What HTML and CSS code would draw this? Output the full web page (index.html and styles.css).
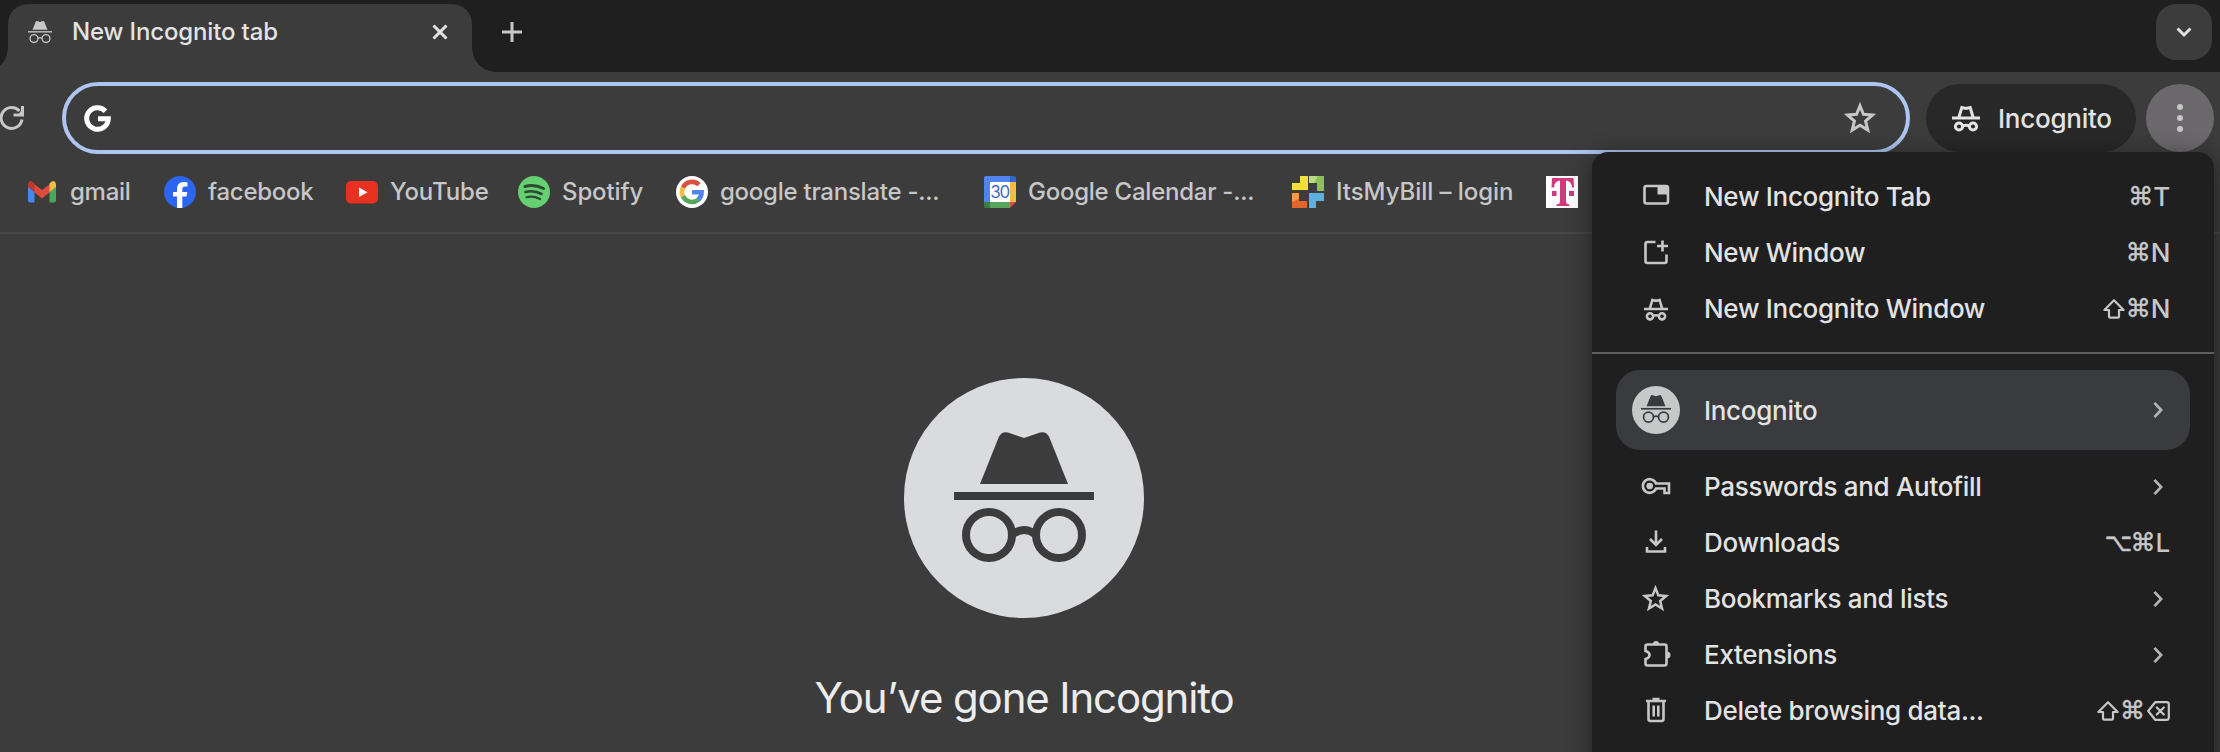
FILE: index.html
```html
<!DOCTYPE html>
<html lang="en">
<head>
<meta charset="utf-8">
<title>New Incognito tab</title>
<link rel="stylesheet" href="styles.css">
</head>
<body>
<svg class="defs" aria-hidden="true">
  <defs>
    <symbol id="spy" viewBox="0 0 140 130">
      <path d="M26 52 45 4.500Q48 -1 54 .5L70 6 86 .5Q92 -1 95 4.500L114 52Z"/>
      <path d="M0 60h140v8H0z"/>
      <g fill="none" stroke="currentColor" stroke-width="8"><circle cx="35" cy="103" r="23"/><circle cx="105" cy="103" r="23"/><path d="M59 102q11-8 22 0"/></g>
    </symbol>
    <symbol id="spy-line" viewBox="0 0 28 28">
      <g fill="none" stroke="currentColor" stroke-width="3"><path d="M7 13 9.800 3.500l4.200 1 4.200-1L21 13M0 14h28"/><circle cx="7" cy="22.500" r="3.600"/><circle cx="21" cy="22.500" r="3.600"/><path d="M10.500 22q3.500-1.500 7 0"/></g>
    </symbol>
    <symbol id="star" viewBox="0 0 30 30"><path fill="none" stroke="currentColor" stroke-width="2.800" d="m15 3.500 3.200 8 8.600.7-6.600 5.600 2.100 8.400L15 21.700l-7.300 4.500 2.100-8.400-6.600-5.600 8.600-.7z"/></symbol>
    <symbol id="chev" viewBox="0 0 12 20"><path fill="none" stroke="currentColor" stroke-width="3" d="m2 2 7.500 8L2 18"/></symbol>
    <symbol id="shift" viewBox="0 0 22 20"><path fill="none" stroke="currentColor" stroke-width="2.200" stroke-linejoin="round" d="M11 1.200 20.600 11H16v6.500q0 1.200-1.200 1.200H7.200Q6 18.700 6 17.500V11H1.400z"/></symbol>
    <symbol id="erase" viewBox="0 0 23 20"><path fill="none" stroke="currentColor" stroke-width="2.200" stroke-linejoin="round" stroke-linecap="round" d="M8.200 1.200h11.600q2 0 2 2v13.600q0 2-2 2H8.200L1.200 10zM9.800 6.500l7 7m0-7-7 7"/></symbol>
  </defs>
</svg>

<header class="tabstrip">
  <div class="tab">
    <svg class="tab-icon"><use href="#spy"/></svg>
    <span class="tab-title">New Incognito tab</span>
    <svg class="tab-close" viewBox="0 0 16 16"><path d="m1.500 1.500 13 13m0-13-13 13"/></svg>
  </div>
  <svg class="tab-add" viewBox="0 0 20 20"><path d="M10 0v20M0 10h20"/></svg>
  <div class="tab-search"><svg viewBox="0 0 16 10"><path d="m1.500 1.500 6.500 6.500 6.500-6.500"/></svg></div>
</header>

<div class="toolbar">
  <svg class="reload" viewBox="0 0 24 24"><path d="M22 13.500A10.500 10.500 0 1 1 19.500 5"/><path class="solid" d="M24 0v10.500H13.500V7.500h5.500L21 5V0z"/></svg>
  <div class="omnibox">
    <svg class="g-white" viewBox="0 0 27 27"><path d="M21.500 6.200A10.800 10.800 0 1 0 24.300 13.700H14"/></svg>
    <svg class="omni-star"><use href="#star"/></svg>
  </div>
  <div class="pill"><svg><use href="#spy-line"/></svg><span>Incognito</span></div>
  <div class="more"><i></i><i></i><i></i></div>
</div>

<nav class="bookmarks">
  <a class="bm bm-gmail"><svg viewBox="0 0 32 32"><path fill="#4a86ee" d="M2 10l6.500 5v11.500H4q-2 0-2-2z"/><path fill="#4aa557" d="M30 10l-6.500 5v11.500H28q2 0 2-2z"/><path fill="#dd4b3e" d="M8 8l8 6 8-6v8l-8 6.500L8 16z"/><path fill="#b93a31" d="M2 9q0-4 3.500-4L8.500 7.500V16L2 11z"/><path fill="#f2be42" d="M30 9q0-4-3.500-4l-3 2.500V16l6.500-5z"/></svg><span>gmail</span></a>
  <a class="bm bm-fb"><svg viewBox="0 0 32 32"><circle cx="16" cy="16" r="16" fill="#2b65f0"/><path fill="#fff" d="M13 32V20.500H9V16h4v-3q0-7 7-7 2 0 3.500.4v4.200h-2.500q-2.700 0-2.700 2.700V16h5l-.8 4.500h-4.200V32z"/></svg><span>facebook</span></a>
  <a class="bm bm-yt"><svg viewBox="0 0 32 32"><rect y="5" width="32" height="22.500" rx="5" fill="#e8311f"/><path fill="#fff" d="m13 11.500 8.500 4.700L13 21z"/></svg><span>YouTube</span></a>
  <a class="bm bm-sp"><svg viewBox="0 0 32 32"><circle cx="16" cy="16" r="16" fill="#66cf71"/><g fill="none" stroke="#2c4a33" stroke-linecap="round"><path stroke-width="3" d="M7 10.500q9.500-2.500 18.500 2"/><path stroke-width="2.600" d="M7.500 16q8.500-2.200 16 2"/><path stroke-width="2.200" d="M8.500 21.200q7-1.700 13.500 1.800"/></g></svg><span>Spotify</span></a>
  <a class="bm bm-gt"><svg viewBox="0 0 32 32"><circle cx="16" cy="16" r="16" fill="#fff"/><g fill="none" stroke-width="4.600"><path stroke="#d85140" d="M23 8.700A10 10 0 0 0 7 11.700"/><path stroke="#f1bd42" d="M7 11.500a10 10 0 0 0 0 9"/><path stroke="#58a65c" d="M7 20.300a10 10 0 0 0 15.500 3.200"/><path stroke="#5383ec" d="M22.300 23.700a10 10 0 0 0 3.300-7.500H16"/></g></svg><span>google translate -...</span></a>
  <a class="bm bm-cal"><svg viewBox="0 0 32 32"><path fill="#5383ec" d="M0 2q0-2 2-2h24v6H6v20H0z"/><path fill="#3068ce" d="M26 0h4q2 0 2 2v4h-6z"/><path fill="#f1bd42" d="M26 6h6v20h-6z"/><path fill="#58a65c" d="M6 26h20v6H6z"/><path fill="#3a7f42" d="M0 26h6v6H2q-2 0-2-2z"/><path fill="#d85140" d="M26 26h6l-6 6z"/><path fill="#fff" d="M6 6h20v20H6z"/><text x="15.700" y="21.600" text-anchor="middle">30</text></svg><span>Google Calendar -...</span></a>
  <a class="bm bm-bill"><svg viewBox="0 0 32 32"><path fill="#f3df3a" d="M8 0h8v14H0V7h8z"/><path fill="#8fbf56" d="M17 0h15v15h-7V7h-8z"/><path fill="#b9dc86" d="M17 0h9l-4 7h-5z"/><path fill="#e0662e" d="M0 17h7v8h8v7H0z"/><path fill="#ef9a4a" d="M0 17h7v6l-7 3z"/><path fill="#5eb0e2" d="M17 17h15v8h-8v7h-7z"/></svg><span>ItsMyBill – login</span></a>
  <a class="bm bm-tm"><svg viewBox="0 0 32 32"><path fill="#fff" d="M0 0h32v32H0z"/><path fill="#cf3a7c" d="M6 2h21.500l.5 9.500H26Q25.500 5 20 4.500V25q0 3.500 3.500 3.500V30h-13v-1.500Q14 28.500 14 25V4.500Q8.500 5 8 11.500H5.500zM6 15h4.500v5H6zm17 0h5v5h-5z"/></svg></a>
</nav>

<main class="page">
  <div class="hero"><svg><use href="#spy"/></svg></div>
  <h1>You’ve gone Incognito</h1>
</main>

<aside class="menu">
  <div class="item"><svg class="ic" viewBox="0 0 32 32"><rect x="4.500" y="5" width="23.500" height="17.500" rx="2"/><path class="solid" d="M17.500 5h11v8.500h-11z"/></svg><span class="label">New Incognito Tab</span><span class="keys"><b>⌘</b>T</span></div>
  <div class="item"><svg class="ic" viewBox="0 0 32 32"><path d="M15.500 5H7.500Q5.500 5 5.500 7v17q0 2 2 2h17q2 0 2-2v-6.500M22.500 3.500v11M17 9h11"/></svg><span class="label">New Window</span><span class="keys"><b>⌘</b>N</span></div>
  <div class="item"><svg class="ic spy-s"><use href="#spy-line"/></svg><span class="label">New Incognito Window</span><span class="keys"><svg class="k-shift"><use href="#shift"/></svg><b>⌘</b>N</span></div>
  <hr>
  <div class="item active"><span class="avatar"><svg><use href="#spy"/></svg></span><span class="label">Incognito</span><svg class="chev"><use href="#chev"/></svg></div>
  <div class="item"><svg class="ic" viewBox="0 0 32 32"><path d="M16 12.500H29V22h-4.500v-4.500H16a6.800 6.800 0 1 1 0-5z"/><circle class="solid" cx="9.700" cy="15" r="3.300"/></svg><span class="label">Passwords and Autofill</span><svg class="chev"><use href="#chev"/></svg></div>
  <div class="item"><svg class="ic" viewBox="0 0 32 32"><path d="M16 3.500v14M10 12l6 6 6-6M7 20v4.500h18V20"/></svg><span class="label">Downloads</span><span class="keys"><b class="opt">⌥</b><b>⌘</b>L</span></div>
  <div class="item"><svg class="ic star-s"><use href="#star"/></svg><span class="label">Bookmarks and lists</span><svg class="chev"><use href="#chev"/></svg></div>
  <div class="item"><svg class="ic" viewBox="0 0 32 32"><path d="M7.500 5.500h17q2 0 2 2v17q0 2-2 2h-17q-2 0-2-2v-4.500q4-1 4-4t-4-4V7.500q0-2 2-2z"/><path class="solid" d="M13 5a3 3 0 0 1 6 0zM27 12.500a3.500 3.500 0 0 1 0 7z"/></svg><span class="label">Extensions</span><svg class="chev"><use href="#chev"/></svg></div>
  <div class="item"><svg class="ic" viewBox="0 0 32 32"><path d="M8.500 6.500V24q0 2 2 2h11q2 0 2-2V6.500M6 6h20M12.500 4h7M13.700 10.500v11M18.300 10.500v11"/></svg><span class="label">Delete browsing data...</span><span class="keys"><svg class="k-shift"><use href="#shift"/></svg><b>⌘</b><svg class="k-erase"><use href="#erase"/></svg></span></div>
</aside>
</body>
</html>
```
FILE: styles.css
```css
* { box-sizing: border-box; }
html, body { margin: 0; height: 752px; overflow: hidden; }
body {
  width: 2220px;
  background: #3c3c3c;
  color: #e3e3e3;
  font: 450 24px/32px Inter, "Liberation Sans", sans-serif;
  display: flex;
  flex-direction: column;
  position: relative;
}
svg { display: block; flex: none; fill: currentColor; overflow: visible; }
.defs { position: absolute; width: 0; height: 0; }

.tabstrip {
  height: 72px;
  background: #1f1f1f;
  display: flex;
  align-items: flex-start;
  padding: 4px 8px 0;
}
.tab {
  position: relative;
  width: 464px;
  height: 68px;
  background: #3c3c3c;
  border-radius: 20px 20px 0 0;
  display: flex;
  align-items: flex-start;
  padding: 12px 24px 0 20px;
}
.tab::before, .tab::after {
  content: "";
  position: absolute;
  bottom: 0;
  width: 24px;
  height: 24px;
}
.tab::before { left: -24px; background: radial-gradient(circle at 0 0, transparent 23.5px, #3c3c3c 24px); }
.tab::after { right: -24px; background: radial-gradient(circle at 100% 0, transparent 23.5px, #3c3c3c 24px); }
.tab-icon { width: 24px; height: 24px; margin-top: 4px; color: #c7c7c7; }
.tab-title { margin-left: 20px; flex: 1; white-space: nowrap; letter-spacing: -.15px; }
.tab-close { width: 16px; height: 16px; margin-top: 8px; fill: none; stroke: #e3e3e3; stroke-width: 3; }
.tab-add { width: 20px; height: 20px; margin: 18px 0 0 30px; stroke: #c7c7c7; stroke-width: 3; }
.tab-search {
  width: 56px;
  height: 56px;
  margin-left: auto;
  border-radius: 20px;
  background: #3c3c3c;
  display: grid;
  place-items: center;
}
.tab-search svg { width: 16px; height: 10px; fill: none; stroke: #e3e3e3; stroke-width: 3; }

.toolbar { height: 92px; display: flex; align-items: flex-start; padding-top: 10px; }
.reload { width: 24px; height: 24px; margin: 24px 38px 0 0; fill: none; stroke: #c7c7c7; stroke-width: 3; }
.reload .solid { fill: #c7c7c7; stroke: none; }
.omnibox {
  width: 1848px;
  height: 72px;
  border: 4px solid #adc5f0;
  border-radius: 36px;
  display: flex;
  align-items: center;
  justify-content: space-between;
  padding: 0 30px 0 18px;
}
.g-white { width: 27px; height: 27px; fill: none; stroke: #fff; stroke-width: 5; }
.omni-star { width: 32px; height: 32px; color: #c7c7c7; }
.pill {
  width: 210px;
  height: 68px;
  margin: 2px 10px 0 16px;
  border-radius: 34px;
  background: #282828;
  display: flex;
  align-items: center;
  padding: 2px 0 0 26px;
  gap: 18px;
  font-size: 26px;
  letter-spacing: -.25px;
}
.pill svg { width: 28px; height: 28px; margin-top: -2px; }
.more {
  width: 68px;
  height: 68px;
  margin-top: 2px;
  border-radius: 50%;
  background: #6b696b;
  display: flex;
  flex-direction: column;
  align-items: center;
  justify-content: center;
  gap: 5px;
}
.more i { width: 6px; height: 6px; border-radius: 50%; background: #c7c7c7; }

.bookmarks {
  height: 70px;
  border-bottom: 2px solid #474747;
  display: flex;
  align-items: flex-start;
  padding: 12px 0 0 26px;
  color: #c7c7c7;
  letter-spacing: -.25px;
}
.bm { display: flex; gap: 12px; white-space: nowrap; flex: none; }
.bm svg { width: 32px; height: 32px; }
.bm text { font: 17px Inter, sans-serif; fill: #3f6fc9; letter-spacing: -1.2px; }
.bm-gmail { width: 138px; }
.bm-fb { width: 182px; }
.bm-yt { width: 172px; letter-spacing: -.12px; }
.bm-sp { width: 158px; letter-spacing: -.12px; }
.bm-gt { width: 308px; }
.bm-cal { width: 308px; }
.bm-bill { width: 254px; letter-spacing: -.05px; }

.page { width: 2048px; display: flex; flex-direction: column; align-items: center; padding-top: 144px; }
.hero { width: 240px; height: 240px; border-radius: 50%; background: #dadbdf; color: #3c3c3c; padding: 54px 50px; }
.hero svg { width: 140px; height: 130px; }
h1 { margin: 55px 0 0; font-weight: 400; font-size: 42px; line-height: 50px; letter-spacing: -1.15px; white-space: nowrap; color: #ececec; }

.menu {
  position: absolute;
  left: 1592px;
  top: 152px;
  width: 622px;
  height: 620px;
  background: #1f1f1f;
  border-radius: 16px 16px 0 0;
  box-shadow: 0 4px 24px rgba(0, 0, 0, .45);
  padding-top: 17px;
  font-size: 26px;
  letter-spacing: -.3px;
}
.item { height: 56px; display: flex; align-items: center; padding: 0 44px 0 48px; white-space: nowrap; }
.ic { width: 32px; height: 32px; fill: none; stroke: #c7c7c7; stroke-width: 2.6; color: #c7c7c7; }
.ic .solid { fill: #c7c7c7; stroke: none; }
.spy-s { width: 24px; height: 24px; margin: 0 4px; stroke: none; }
.star-s { width: 27px; height: 27px; margin: 0 3px 2px 2px; }
.label { margin-left: 32px; }
.keys { margin-left: auto; color: #c7c7c7; display: flex; align-items: center; }
.keys b { width: 25px; display: flex; justify-content: center; font: 25px/32px "DejaVu Sans", sans-serif; letter-spacing: 0; -webkit-text-stroke: .5px currentColor; }
.keys .opt { transform: scaleX(.95); }
.k-shift { width: 22px; height: 20px; margin-right: 1px; }
.k-erase { width: 23px; height: 20px; margin-left: 2px; }
.chev { width: 12px; height: 18px; margin: 0 6px 0 auto; color: #b4b4b4; }
.menu hr { height: 2px; margin: 15px 0 16px; border: 0; background: #5c5c5c; }
.item.active { height: 80px; margin: 0 24px 9px; border-radius: 24px; background: #3a3b3f; padding: 0 20px 0 16px; }
.avatar { width: 48px; height: 48px; border-radius: 50%; background: #c7c9c8; color: #3a3b3f; padding: 9px; }
.avatar svg { width: 30px; height: 28px; }
.active .label { margin: 1px 0 0 24px; }
```
